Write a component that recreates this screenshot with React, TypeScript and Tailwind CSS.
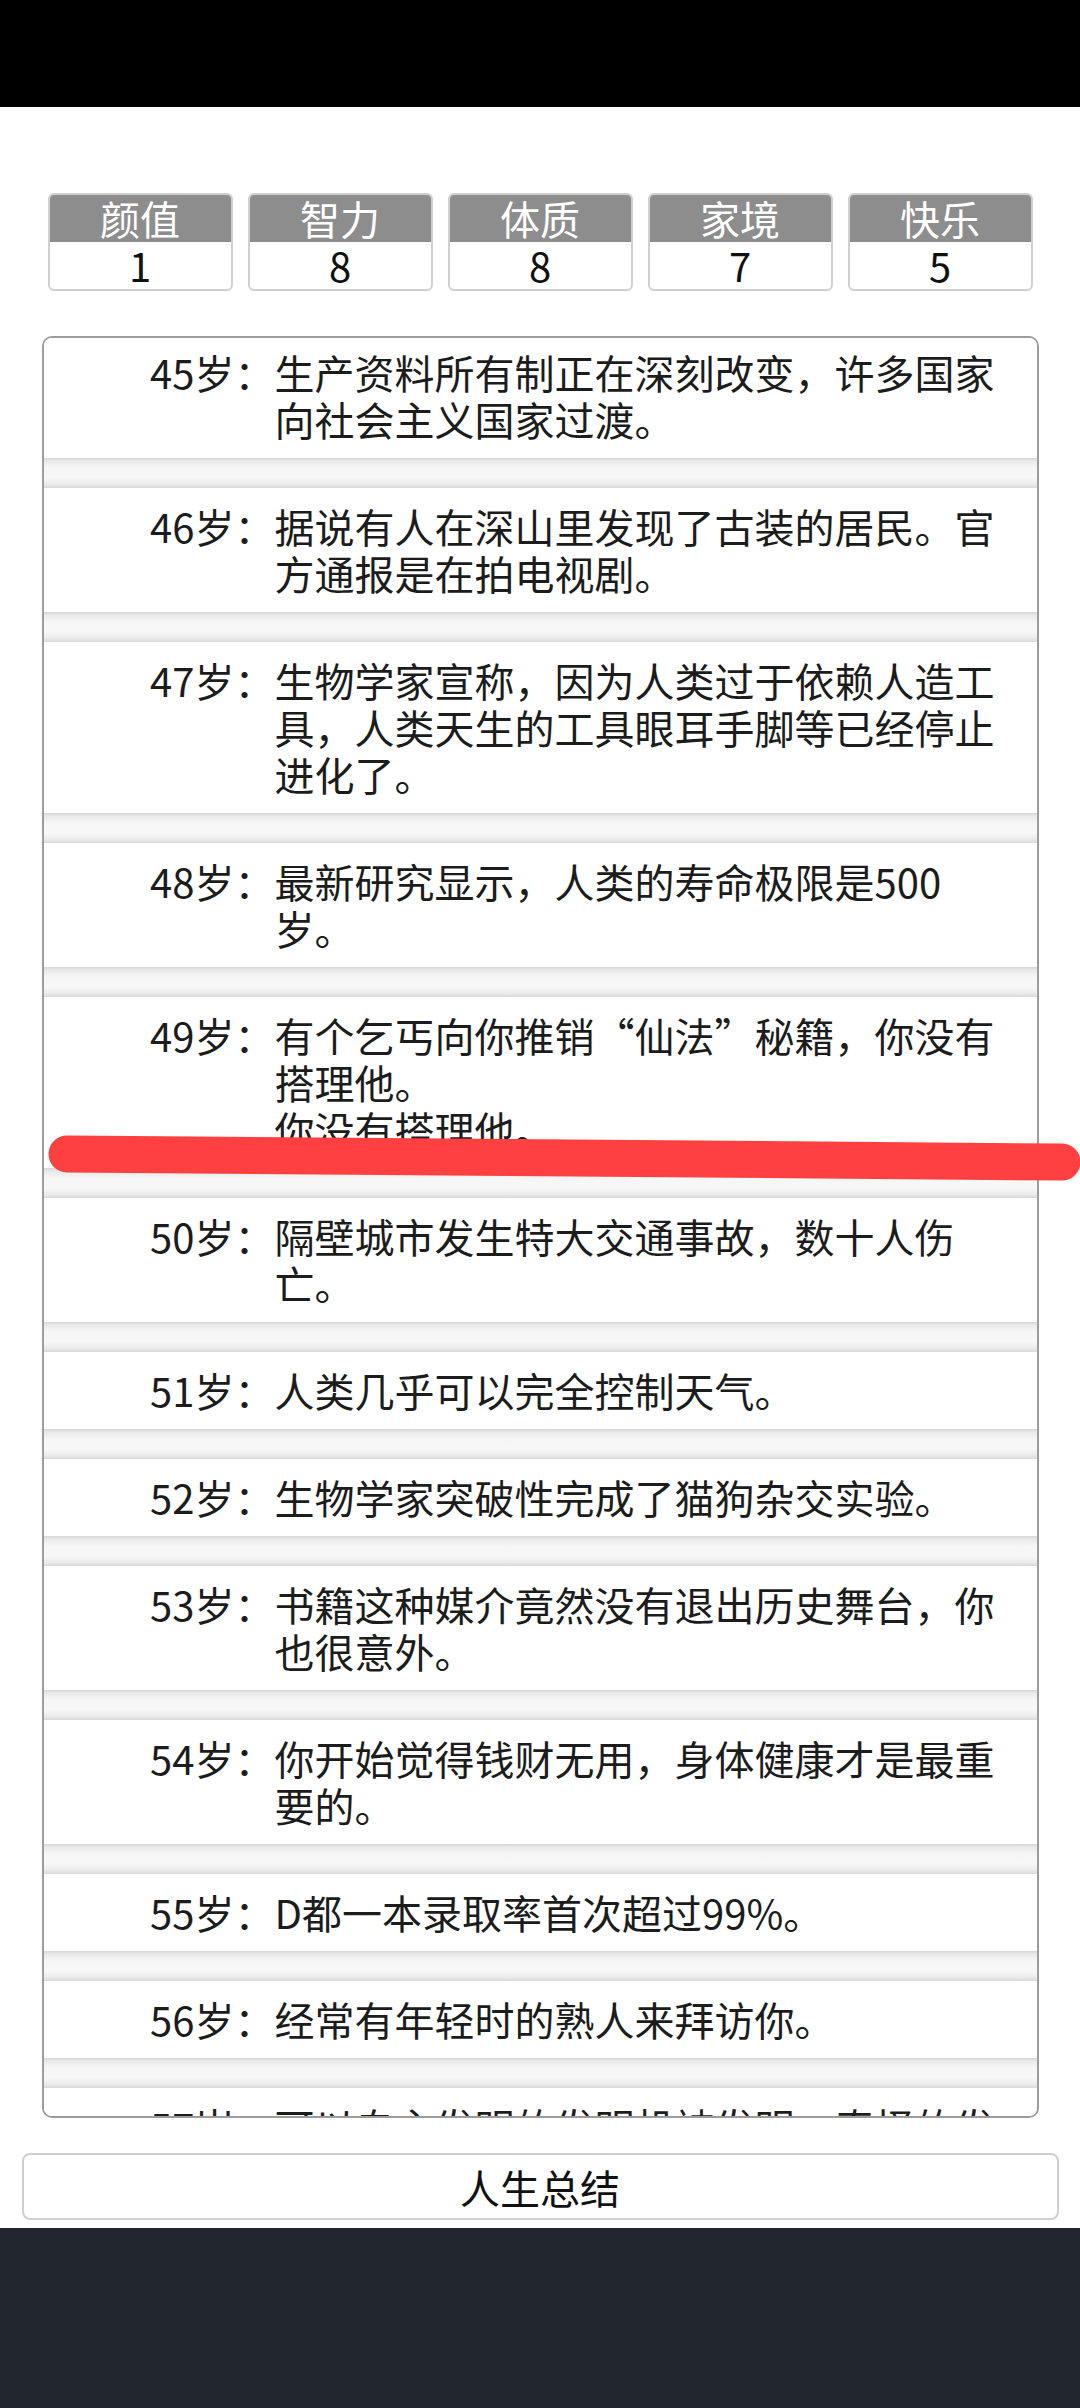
import type { JSX } from "react"

interface Stat {
  label: string
  value: number
}

interface LifeEvent {
  age: number
  text: string
  extra?: string
}

const stats: Stat[] = [
  { label: "颜值", value: 1 },
  { label: "智力", value: 8 },
  { label: "体质", value: 8 },
  { label: "家境", value: 7 },
  { label: "快乐", value: 5 },
]

const events: LifeEvent[] = [
  { age: 45, text: "生产资料所有制正在深刻改变，许多国家向社会主义国家过渡。" },
  { age: 46, text: "据说有人在深山里发现了古装的居民。官方通报是在拍电视剧。" },
  { age: 47, text: "生物学家宣称，因为人类过于依赖人造工具，人类天生的工具眼耳手脚等已经停止进化了。" },
  { age: 48, text: "最新研究显示，人类的寿命极限是500岁。" },
  { age: 49, text: "有个乞丐向你推销“仙法”秘籍，你没有搭理他。", extra: "你没有搭理他。" },
  { age: 50, text: "隔壁城市发生特大交通事故，数十人伤亡。" },
  { age: 51, text: "人类几乎可以完全控制天气。" },
  { age: 52, text: "生物学家突破性完成了猫狗杂交实验。" },
  { age: 53, text: "书籍这种媒介竟然没有退出历史舞台，你也很意外。" },
  { age: 54, text: "你开始觉得钱财无用，身体健康才是最重要的。" },
  { age: 55, text: "D都一本录取率首次超过99%。" },
  { age: 56, text: "经常有年轻时的熟人来拜访你。" },
  { age: 57, text: "可以自主发明的发明机被发明，奇怪的发明越来越多。" },
]

function StatBox({ label, value }: Stat): JSX.Element {
  return (
    <div className="w-[185px] rounded-[6px] border-2 border-[#d0d0d0] overflow-hidden bg-white">
      <div className="h-[47px] bg-[#8d8d8d] text-white text-[40px] leading-[47px] text-center">{label}</div>
      <div className="h-[47px] text-[#111] text-[40px] leading-[47px] text-center">{value}</div>
    </div>
  )
}

function Separator(): JSX.Element {
  return (
    <div className="h-[30px] bg-[linear-gradient(to_bottom,#d6d6d6_0px,#e9e9e9_3px,#f6f6f6_10px,#f7f7f7_20px,#ececec_26px,#d9d9d9_30px)]" />
  )
}

function EventRow({ age, text, extra }: LifeEvent): JSX.Element {
  return (
    <div className="flex bg-white py-[15px] text-[40px] leading-[47px] text-[#1c1c1c]">
      <div className="w-[231px] shrink-0 text-right">{age}岁：</div>
      <div className="flex-1 pr-[32px]">
        <div>{text}</div>
        {extra ? <div>{extra}</div> : null}
      </div>
    </div>
  )
}

export default function App(): JSX.Element {
  return (
    <div
      lang="zh-CN"
      className="relative w-[1080px] h-[2408px] bg-white flex flex-col overflow-hidden font-['Noto_Sans_CJK_SC','Noto_Sans',sans-serif]"
    >
      {/* status bar */}
      <div className="h-[107px] bg-black shrink-0" />

      {/* attributes */}
      <div className="mt-[86px] flex justify-center gap-[15px]">
        {stats.map((s) => (
          <StatBox key={s.label} {...s} />
        ))}
      </div>

      {/* event list */}
      <div className="mt-[45px] mx-auto w-[997px] h-[1782px] rounded-[10px] border-2 border-[#9c9c9c] overflow-hidden">
        <div className="-mt-[4px]">
          {events.map((e, i) => (
            <div key={e.age}>
              {i > 0 && <Separator />}
              <EventRow {...e} />
            </div>
          ))}
        </div>
      </div>

      {/* summary button */}
      <div className="mt-[35px] mx-auto w-[1037px] h-[67px] rounded-[8px] border-2 border-[#cfcfcf] bg-white flex items-center justify-center text-[40px] text-[#111]">
        人生总结
      </div>

      {/* nav bar */}
      <div className="mt-[8px] flex-1 bg-[#22272f]" />

      {/* red marker stroke drawn over the screen */}
      <svg className="absolute left-0 top-0 pointer-events-none" width="1080" height="2408" viewBox="0 0 1080 2408">
        <line x1="67" y1="1154" x2="1062" y2="1162" stroke="#fe4041" strokeWidth="37" strokeLinecap="round" />
      </svg>
    </div>
  )
}
